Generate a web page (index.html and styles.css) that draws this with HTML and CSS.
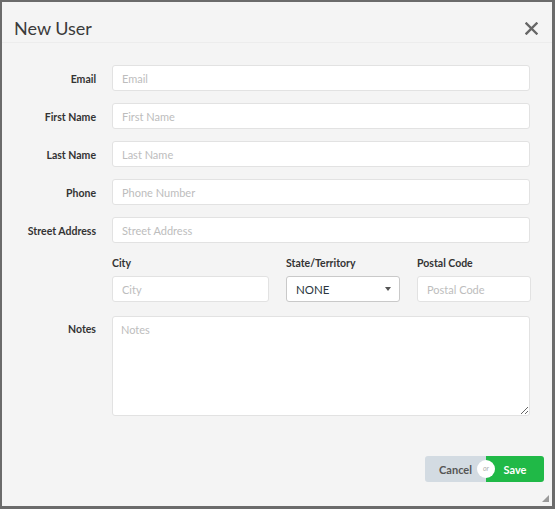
FILE: index.html
```html
<!DOCTYPE html>
<html lang="en">
<head>
  <meta charset="UTF-8" />
  <title>New User</title>
  <link rel="stylesheet" href="styles.css">
</head>
<body>
  <div class="modal">
    <div class="modal-header">
      <h2>New User</h2>
      <button class="close" type="button" aria-label="Close">
        <svg width="13" height="13" viewBox="0 0 13 13">
          <path d="M1.5 1.5 L11.5 11.5 M11.5 1.5 L1.5 11.5" stroke="#666" stroke-width="2.4" stroke-linecap="square" fill="none"/>
        </svg>
      </button>
    </div>

    <form class="modal-body" id="user-form">
      <div class="row">
        <label for="email">Email</label>
        <input type="text" id="email" placeholder="Email" />
      </div>
      <div class="row">
        <label for="first">First Name</label>
        <input type="text" id="first" placeholder="First Name" />
      </div>
      <div class="row">
        <label for="last">Last Name</label>
        <input type="text" id="last" placeholder="Last Name" />
      </div>
      <div class="row">
        <label for="phone">Phone</label>
        <input type="text" id="phone" placeholder="Phone Number" />
      </div>
      <div class="row">
        <label for="street">Street Address</label>
        <input type="text" id="street" placeholder="Street Address" />
      </div>

      <div class="row">
        <span></span>
        <div class="split">
          <div class="field">
            <label for="city">City</label>
            <input type="text" id="city" placeholder="City" />
          </div>
          <div class="field">
            <label for="state">State/Territory</label>
            <div class="select-wrap">
              <select id="state">
                <option>NONE</option>
                <option>ACT</option>
                <option>NSW</option>
                <option>NT</option>
                <option>QLD</option>
                <option>SA</option>
                <option>TAS</option>
                <option>VIC</option>
                <option>WA</option>
              </select>
              <span class="arrow"></span>
            </div>
          </div>
          <div class="field">
            <label for="postal">Postal Code</label>
            <input type="text" id="postal" placeholder="Postal Code" />
          </div>
        </div>
      </div>

      <div class="row notes">
        <label for="notes">Notes</label>
        <textarea id="notes" placeholder="Notes"></textarea>
      </div>
    </form>

    <div class="modal-footer">
      <div class="buttons">
        <button type="button" class="btn cancel">Cancel</button>
        <span class="or">or</span>
        <button type="submit" form="user-form" class="btn save">Save</button>
      </div>
    </div>
    <span class="grip"></span>
  </div>
</body>
</html>
```

FILE: styles.css
```css
* { box-sizing: border-box; }

html, body {
  height: 100%;
}

body {
  margin: 0;
  padding: 2px 3px 3px 2px;
  background: #6b6b6b;
  font-family: Lato, "Open Sans", sans-serif;
  color: #333;
}

.modal {
  position: relative;
  display: flex;
  flex-direction: column;
  height: 504px;
  background: #f4f4f4;
}

.modal-header {
  display: flex;
  align-items: center;
  justify-content: space-between;
  height: 41px;
  padding: 12px 14px 0 12px;
  border-bottom: 1px solid #ececec;
}

.modal-header h2 {
  margin: 0;
  font-size: 18px;
  font-weight: normal;
  line-height: 22px;
  color: #3a3a3a;
}

.close {
  padding: 0;
  border: none;
  background: none;
  cursor: pointer;
  line-height: 0;
}

.modal-body {
  padding: 22px 22px 0 0;
}

.row {
  display: grid;
  grid-template-columns: 94px 418px;
  column-gap: 16px;
  align-items: center;
  margin-bottom: 12px;
}

.row > label {
  padding-top: 1px;
  text-align: right;
  font-size: 10.5px;
  font-weight: bold;
  color: #333;
}

input[type="text"],
textarea,
select {
  width: 100%;
  height: 26px;
  padding: 0 9px;
  border: 1px solid #e2e2e2;
  border-radius: 3px;
  background: #fff;
  font-family: Lato, "Open Sans", sans-serif;
  font-size: 11px;
  color: #333;
  outline: none;
}

input::placeholder,
textarea::placeholder {
  color: #bdbdbd;
}

.split {
  display: grid;
  grid-template-columns: 157px 114px 114px;
  column-gap: 17px;
}

.field label {
  display: block;
  font-size: 10.5px;
  font-weight: bold;
  line-height: 14px;
  margin-top: 1px;
  margin-bottom: 6px;
}

.select-wrap {
  position: relative;
}

select {
  appearance: none;
  -webkit-appearance: none;
  border-color: #c9c9c9;
  color: #2b3640;
  font-size: 11.5px;
  cursor: pointer;
}

.select-wrap .arrow {
  position: absolute;
  right: 9px;
  top: 11px;
  border-left: 3px solid transparent;
  border-right: 3px solid transparent;
  border-top: 4px solid #555;
  pointer-events: none;
}

.notes {
  align-items: start;
  margin-top: 14px;
}

.notes > label {
  padding-top: 7px;
}

textarea {
  height: 100px;
  padding: 6px 8px;
  resize: vertical;
}

.modal-footer {
  display: flex;
  justify-content: flex-end;
  padding: 28px 8px 0 0;
}

.buttons {
  position: relative;
  display: flex;
}

.btn {
  height: 26px;
  border: none;
  font-family: Lato, "Open Sans", sans-serif;
  font-size: 11px;
  font-weight: bold;
  cursor: pointer;
}

.cancel {
  width: 61px;
  background: #d3dbe2;
  color: #555;
  border-radius: 3px 0 0 3px;
}

.save {
  width: 58px;
  background: #20b947;
  color: #fff;
  border-radius: 0 3px 3px 0;
}

.or {
  position: absolute;
  left: 52px;
  top: 4px;
  width: 18px;
  height: 18px;
  border-radius: 50%;
  background: #fff;
  color: #aaa;
  font-size: 7px;
  font-style: italic;
  line-height: 17px;
  text-align: center;
}

.grip {
  position: absolute;
  right: 3px;
  bottom: 4px;
  border-left: 7px solid transparent;
  border-bottom: 7px solid #9a9a9a;
}
```
